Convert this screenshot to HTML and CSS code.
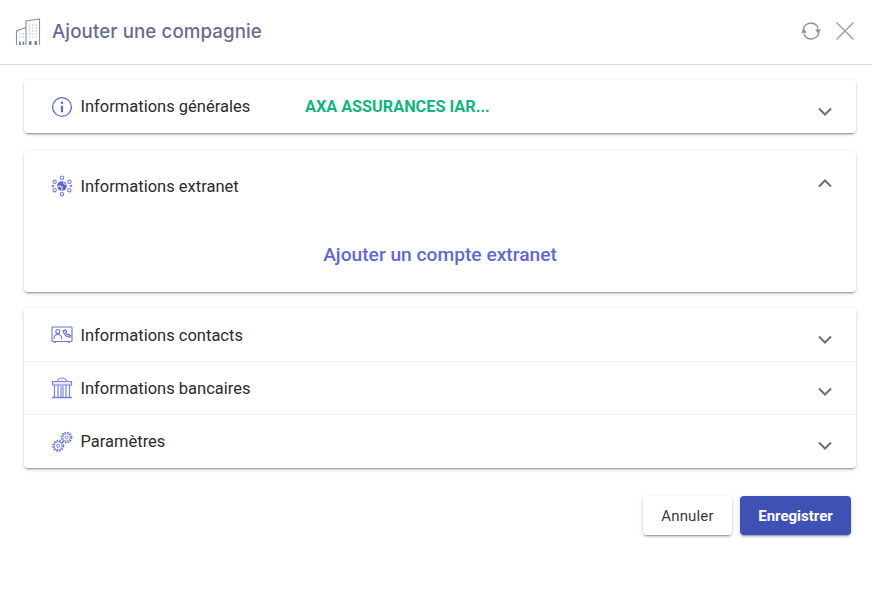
FILE: index.html
```html
<!DOCTYPE html>
<html lang="fr">
<head>
<meta charset="utf-8">
<title>Ajouter une compagnie</title>
<link rel="stylesheet" href="styles.css">
</head>
<body>
<header class="top">
  <svg class="building" width="26" height="28" viewBox="0 0 26 28" fill="none" stroke="#8a8fb0" stroke-width="1.100">
    <path d="M11 27V3L24.500 1V27"/>
    <path d="M11 9.500L1.500 13V27"/>
    <g stroke="#a9adc6" stroke-width="1.100">
      <path d="M14 7h1.200M17.200 7h1.200M20.400 7h1.200M14 10h1.200M17.200 10h1.200M20.400 10h1.200M14 13h1.200M17.200 13h1.200M20.400 13h1.200M14 16h1.200M17.200 16h1.200M20.400 16h1.200M14 19h1.200M17.200 19h1.200M20.400 19h1.200"/>
      <path d="M4 16h1.500M7.500 16H9M4 19h1.500M7.500 19H9"/>
    </g>
    <path d="M4 27v-3.500h1.800V27M7.500 27v-3.500h1.800V27M14 27v-4h2.500v4M19.500 27v-4H22v4" fill="#7d83a8" stroke="none"/>
  </svg>
  <h1 class="title">Ajouter une compagnie</h1>
  <div class="top-actions">
    <svg width="22" height="20" viewBox="0 0 22 20" fill="none" stroke="#8f8f8f" stroke-width="1.300">
      <path d="M3 10a8 8 0 0 1 14-5.200l1 2.700"/>
      <path d="M19 10a8 8 0 0 1-14 5.200l-1-2.700"/>
      <path d="M15.200 8.200h5.600L18 12.500z" fill="#8f8f8f" stroke="none"/>
      <path d="M1.200 11.800h5.600L4 7.500z" fill="#8f8f8f" stroke="none"/>
    </svg>
    <svg width="20" height="20" viewBox="0 0 20 20" fill="none" stroke="#9a9a9a" stroke-width="1.300">
      <path d="M1.500 1.500l17 17M18.500 1.500l-17 17"/>
    </svg>
  </div>
</header>
<main class="content">
  <section class="card">
    <div class="row row-top">
      <svg class="icon" width="22" height="22" viewBox="0 0 22 22" fill="none" stroke="#6068d8" stroke-width="1.300">
        <circle cx="11" cy="11" r="9.400"/>
        <circle cx="11" cy="6.800" r="1.300" fill="#6068d8" stroke="none"/>
        <path d="M11 9.800v6.500" stroke-width="2.200"/>
      </svg>
      <span class="label">Informations générales</span>
      <span class="company">AXA ASSURANCES IAR...</span>
      <svg class="chev" width="14" height="9" viewBox="0 0 14 9" fill="none" stroke="#6e6e6e" stroke-width="2"><path d="M1 1.500l6 6 6-6"/></svg>
    </div>
  </section>

  <section class="card">
    <div class="row row-open">
      <svg class="icon" width="22" height="22" viewBox="0 0 22 22" fill="none" stroke="#7a81e2" stroke-width="1.100">
        <circle cx="11" cy="11" r="4.800" fill="#5a63d6" stroke="none"/>
        <path d="M12 7l1.500 2 2.200.5M6.800 12l2.500-1 2 1.500-1 3.200" stroke="#e6e8fb" stroke-width="1.100"/>
        <circle cx="11" cy="2.700" r="1.700"/><circle cx="11" cy="19.300" r="1.700"/>
        <circle cx="3.600" cy="6.800" r="1.700"/><circle cx="18.400" cy="6.800" r="1.700"/>
        <circle cx="3.600" cy="15.200" r="1.700"/><circle cx="18.400" cy="15.200" r="1.700"/>
        <circle cx="2" cy="11" r=".8"/><circle cx="20" cy="11" r=".8"/>
      </svg>
      <span class="label">Informations extranet</span>
      <svg class="chev chev-up" width="14" height="9" viewBox="0 0 14 9" fill="none" stroke="#6e6e6e" stroke-width="2"><path d="M1 7.500l6-6 6 6"/></svg>
    </div>
    <div class="panel">
      <span class="add-link">Ajouter un compte extranet</span>
    </div>
  </section>

  <section class="card card-stack">
    <div class="row row-line row-first">
      <svg class="icon" width="22" height="18" viewBox="0 0 22 18" fill="none" stroke="#6a72dc" stroke-width="1.100">
        <rect x="1" y="1" width="20" height="14.500" rx=".8"/>
        <circle cx="6.800" cy="5.500" r="2"/>
        <path d="M3 13c0-3 1.500-4.500 3.800-4.500s3.800 1.500 3.800 4.500"/>
        <path d="M13 4.500l1.500-.8 1.200 2-1 .8c.5 1.200 1.200 2 2.300 2.500l.8-.8 2 1.500-1 1.500c-3.500 0-6-3-6.800-6.700z" fill="#dfe1fa"/>
        <path d="M4 15.500v1.500M18 15.500v1.500" stroke-width="1.500"/>
      </svg>
      <span class="label">Informations contacts</span>
      <svg class="chev" width="14" height="9" viewBox="0 0 14 9" fill="none" stroke="#6e6e6e" stroke-width="2"><path d="M1 1.500l6 6 6-6"/></svg>
    </div>
    <div class="row row-line">
      <svg class="icon" width="22" height="22" viewBox="0 0 22 22" fill="none" stroke="#7a81e2" stroke-width="1.200">
        <path d="M1.500 4.500h19v3.500h-19z" fill="#e6e8fb"/>
        <path d="M6 4.500C7 2 9 1 11 1s4 1 5 3.500"/>
        <path d="M3.500 8v12M7 8v12M15 8v12M18.500 8v12"/>
        <path d="M9 8h4v12H9z" fill="#b4b8f0" stroke="none"/>
        <path d="M1 20.500h20" stroke-width="1.600"/>
      </svg>
      <span class="label">Informations bancaires</span>
      <svg class="chev" width="14" height="9" viewBox="0 0 14 9" fill="none" stroke="#6e6e6e" stroke-width="2"><path d="M1 1.500l6 6 6-6"/></svg>
    </div>
    <div class="row row-last">
      <svg class="icon" width="22" height="22" viewBox="0 0 22 22" fill="none" stroke="#6a72dc">
        <circle cx="7.200" cy="14.800" r="5.200" stroke-width="1.800" stroke-dasharray="1.600 1.170"/>
        <circle cx="7.200" cy="14.800" r="4" stroke-width=".8"/>
        <circle cx="7.200" cy="14.800" r="1.600" stroke-width=".9"/>
        <circle cx="15.500" cy="6.500" r="5" stroke-width="1.800" stroke-dasharray="1.500 1.120"/>
        <circle cx="15.500" cy="6.500" r="3.800" stroke-width=".8"/>
        <circle cx="15.500" cy="6.500" r="1.500" stroke-width=".9"/>
      </svg>
      <span class="label">Paramètres</span>
      <svg class="chev" width="14" height="9" viewBox="0 0 14 9" fill="none" stroke="#6e6e6e" stroke-width="2"><path d="M1 1.500l6 6 6-6"/></svg>
    </div>
  </section>

  <div class="actions">
    <button class="btn btn-plain" type="button">Annuler</button>
    <button class="btn btn-primary" type="button">Enregistrer</button>
  </div>
</main>
</body>
</html>
```
FILE: styles.css
```css
* { box-sizing: border-box; }
html, body { margin: 0; padding: 0; height: 100%; background: #fff; }
body { font-family: Roboto, "Liberation Sans", sans-serif; color: #2b2b2b; }

.top {
  height: 65px;
  display: flex;
  align-items: center;
  padding: 0 17px 2px 15px;
  border-bottom: 1px solid #dcdcdc;
}
.building { flex: none; margin-right: 11px; margin-top: 1px; }
.title {
  margin: 0;
  font-family: Inter, "Noto Sans", sans-serif;
  font-size: 18.7px;
  font-weight: 500;
  color: #676c93;
  letter-spacing: 0.1px;
}
.top-actions { margin-left: auto; display: flex; align-items: center; gap: 13px; }

.content { padding: 15px 16px 0 24px; }

.card {
  background: #fff;
  border-radius: 4px;
  margin-bottom: 18px;
  box-shadow: 0 3px 1px -2px rgba(0,0,0,.2), 0 2px 2px 0 rgba(0,0,0,.14), 0 1px 5px 0 rgba(0,0,0,.12);
}
.card-stack { margin-bottom: 0; margin-top: -2px; }

.row {
  height: 53px;
  display: flex;
  align-items: center;
  padding: 0 24px 0 27px;
  position: relative;
}
.row-first { height: 54px; }
.row-line { border-bottom: 1px solid #f4f4f4; }
.row-open { height: 70px; }
.icon { flex: none; margin-right: 7.5px; }

.label { font-size: 16.5px; line-height: 20px; color: #2b2b2b; padding-top: 1px; }
.row-top .label { padding-top: 0; }
.row-open .label, .row-first .label { padding-top: 2px; }

.company {
  position: absolute;
  left: 281px;
  font-size: 16.25px;
  font-weight: 700;
  color: #0db67e;
}
.chev { margin-left: auto; flex: none; margin-top: 10px; }
.chev-up { margin-top: -6px; }
.row-line .chev, .row-last .chev { margin-top: 7px; }
.row-first .chev { margin-top: 9px; }

.panel {
  height: 71px;
  display: flex;
  justify-content: center;
  padding: 21px 0 0 0;
}
.add-link { font-size: 19.2px; line-height: 26px; font-weight: 500; color: #6068d8; }

.actions {
  display: flex;
  justify-content: flex-end;
  gap: 8px;
  margin-top: 28px;
  margin-right: 5px;
}
.btn {
  height: 39px;
  border: 0;
  border-radius: 4px;
  font-family: Roboto, "Liberation Sans", sans-serif;
  font-size: 15px;
  box-shadow: 0 3px 1px -2px rgba(0,0,0,.2), 0 2px 2px 0 rgba(0,0,0,.14), 0 1px 5px 0 rgba(0,0,0,.12);
}
.btn-plain { width: 89px; background: #fff; color: #3a3a3a; font-weight: 400; letter-spacing: .15px; }
.btn-primary { width: 111px; background: #3f51b5; color: #fff; font-weight: 700; }
```
